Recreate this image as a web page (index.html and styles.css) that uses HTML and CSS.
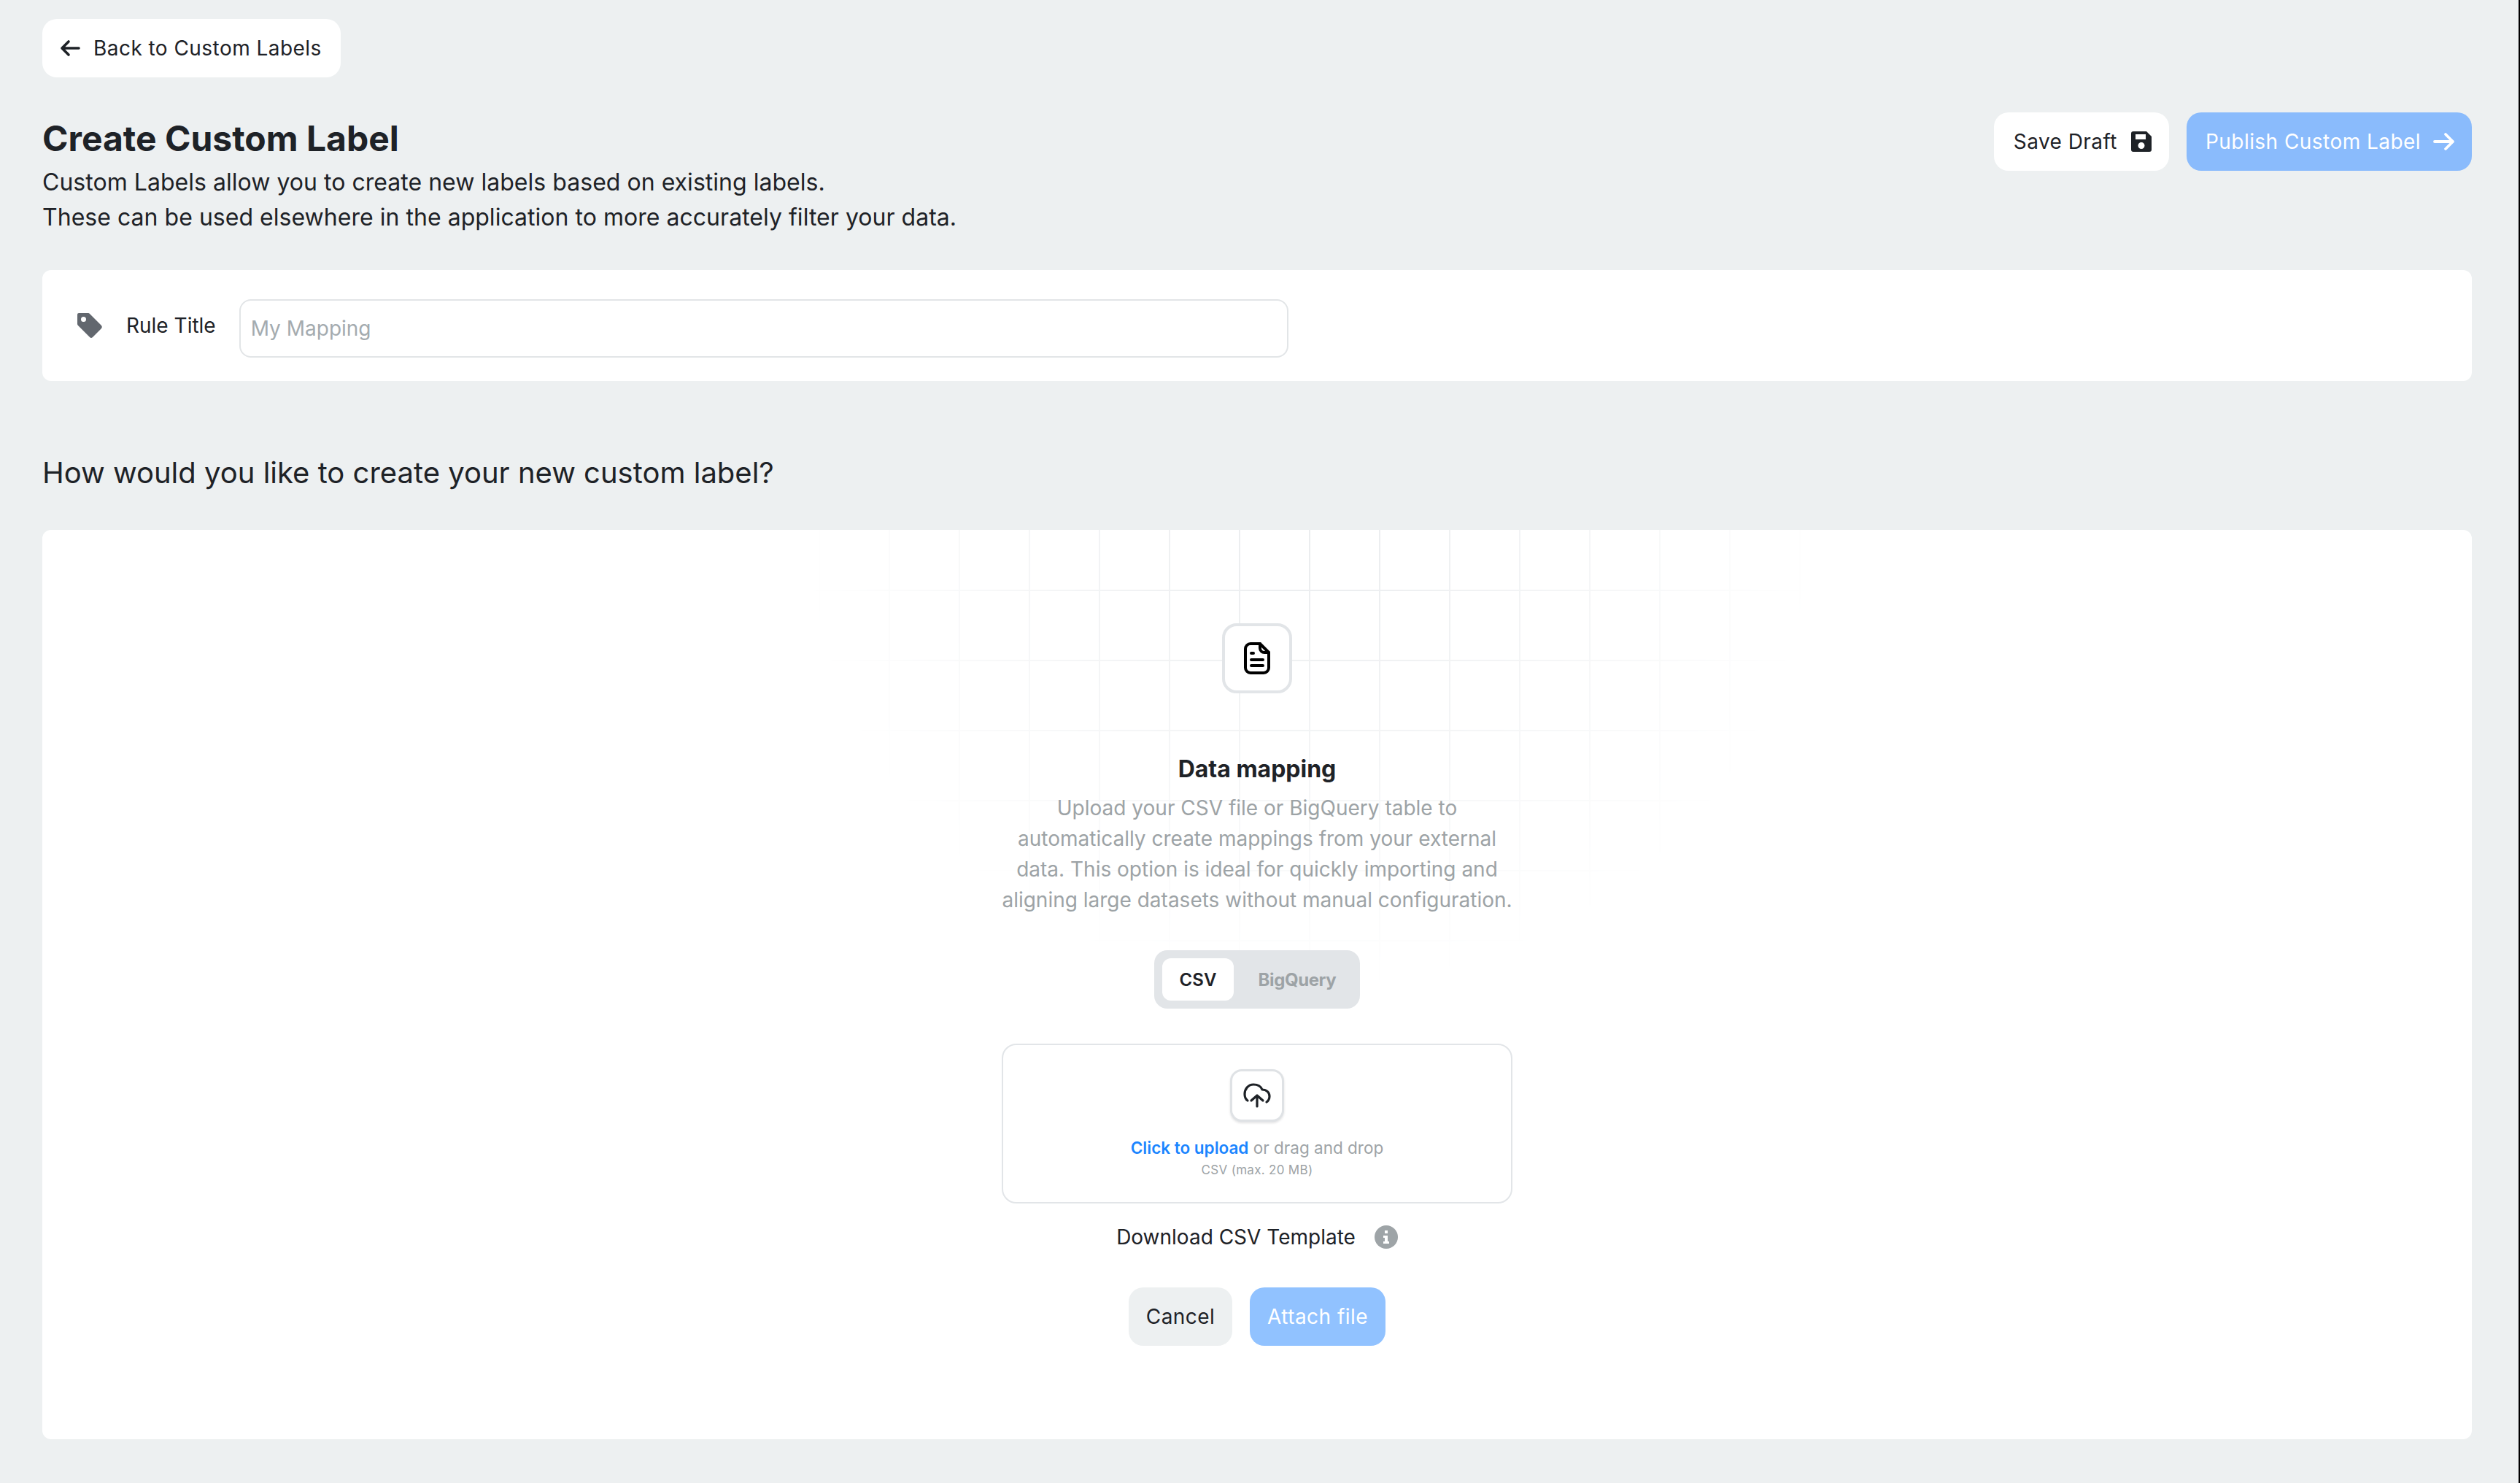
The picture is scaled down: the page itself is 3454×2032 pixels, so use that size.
FILE: index.html
```html
<!DOCTYPE html>
<html lang="en">
<head>
<meta charset="utf-8">
<title>Create Custom Label</title>
<link rel="stylesheet" href="styles.css">
</head>
<body>
<main class="page">
  <a class="btn btn-back">
    <svg class="ic-back" viewBox="0 0 28 24" fill="none" stroke="currentColor" stroke-width="3.6" stroke-linecap="round" stroke-linejoin="round"><path d="M26 12H3M12 3l-9 9 9 9"/></svg>
    <span>Back to Custom Labels</span>
  </a>
  <header class="head">
    <div>
      <h1 class="title">Create Custom Label</h1>
      <p class="sub">Custom Labels allow you to create new labels based on existing labels.</p>
      <p class="sub">These can be used elsewhere in the application to more accurately filter your data.</p>
    </div>
    <div class="actions">
      <a class="btn btn-save">
        <span>Save Draft</span>
        <svg class="ic-save" viewBox="0 0 28 28"><path fill="currentColor" fill-rule="evenodd" d="M3 0h18l7 7v18a3 3 0 0 1-3 3H3a3 3 0 0 1-3-3V3a3 3 0 0 1 3-3zm3 4v7h14V4zm8 11a4.500 4.500 0 1 0 0 9 4.500 4.500 0 0 0 0-9z"/></svg>
      </a>
      <a class="btn btn-publish">
        <span>Publish Custom Label</span>
        <svg class="ic-next" viewBox="0 0 30 26" fill="none" stroke="currentColor" stroke-width="3.800" stroke-linecap="round" stroke-linejoin="round"><path d="M2 13h25M17 3l10 10-10 10"/></svg>
      </a>
    </div>
  </header>

  <section class="card rule">
    <svg class="ic-tag" viewBox="0 0 36 36"><path fill="#62676e" fill-rule="evenodd" d="M3 1h13a3 3 0 0 1 2 1l16 16a3 3 0 0 1 0 4L22 34a3 3 0 0 1-4 0L2 18a3 3 0 0 1-1-2V3a2 2 0 0 1 2-2zm6.500 5a3.500 3.500 0 1 0 0 7 3.500 3.500 0 0 0 0-7z"/></svg>
    <label class="rule-label">Rule Title</label>
    <input class="rule-input" type="text" placeholder="My Mapping">
  </section>

  <h2 class="question">How would you like to create your new custom label?</h2>

  <section class="card main">
    <div class="grid-bg"></div>
    <div class="stack">
      <div class="doc-box">
        <svg class="ic-doc" viewBox="0 0 36 44" fill="none" stroke="#000" stroke-width="4" stroke-linecap="round" stroke-linejoin="round"><path d="M9 2h13l12 12v21a7 7 0 0 1-7 7H9a7 7 0 0 1-7-7V9a7 7 0 0 1 7-7z"/><path d="M22 2v6a6 6 0 0 0 6 6h6M10 15h3M10 24h16M10 32h16"/></svg>
      </div>
      <h3 class="dm-title">Data mapping</h3>
      <p class="dm-text">Upload your CSV file or BigQuery table to automatically create mappings from your external data. This option is ideal for quickly importing and aligning large datasets without manual configuration.</p>
      <div class="toggle">
        <span class="tab tab-on">CSV</span>
        <span class="tab tab-off">BigQuery</span>
      </div>
      <div class="drop">
        <div class="up-box">
          <svg class="ic-up" viewBox="0 0 38 34" fill="none" stroke="#1e2227" stroke-width="3.200" stroke-linecap="round" stroke-linejoin="round"><path d="M6 24C3 22 2 18 2 15 2 8 7 2 14 2c5 0 10 2 12 7 6 0 10 4 10 9 0 3-1 6-4 8"/><path d="M19 32V17M11 24l8-7 8 7"/></svg>
        </div>
        <p class="drop-line"><span class="link">Click to upload</span> or drag and drop</p>
        <p class="drop-note">CSV (max. 20 MB)</p>
      </div>
      <div class="tmpl">
        <span>Download CSV Template</span>
        <span class="info">
          <svg viewBox="0 0 32 32"><circle cx="16" cy="16" r="16" fill="#9ea4a7"/><path fill="#fff" d="M14 7h4v4h-4zM12 14h6v8h2v3h-8v-3h2v-5h-2z"/></svg>
        </span>
      </div>
      <div class="form-btns">
        <a class="btn btn-cancel">Cancel</a>
        <a class="btn btn-attach">Attach file</a>
      </div>
    </div>
  </section>
</main>
</body>
</html>
```
FILE: styles.css
```css
* { box-sizing: border-box; }
html, body { margin: 0; padding: 0; }
body {
  background: #edf0f1;
  color: #1e2227;
  font-family: Inter, "Liberation Sans", sans-serif;
  width: 3454px;
  height: 2032px;
  overflow: hidden;
  border-right: 2px solid #000;
}
.page { padding: 26px 64px 0 58px; }
p, h1, h2, h3 { margin: 0; }

.btn {
  display: inline-flex;
  align-items: center;
  height: 80px;
  border-radius: 20px;
  font-size: 28px;
  letter-spacing: 0.45px;
}
.btn-back { background: #fff; padding: 0 26px 0 24px; gap: 18px; }
.ic-back { width: 28px; height: 24px; }

.head {
  display: flex;
  justify-content: space-between;
  align-items: flex-start;
  margin-top: 48px;
  height: 216px;
}
.title { font-size: 48px; line-height: 64px; font-weight: 650; margin: 4px 0 4px; }
.sub { font-size: 32px; line-height: 48px; letter-spacing: 0.03px; }
.actions { display: flex; gap: 24px; padding-top: 0; }
.btn-save { background: #fff; padding: 0 24px 0 27px; gap: 19px; }
.ic-save { width: 28px; height: 28px; }
.btn-publish { background: #8abbfc; color: #fff; padding: 0 23px 0 26px; gap: 17px; }
.ic-next { width: 30px; height: 26px; }

.card { background: #fff; border-radius: 12px; }
.rule {
  display: flex;
  align-items: center;
  padding: 32px 47px;
  height: 152px;
}
.ic-tag { width: 36px; height: 36px; }
.rule-label { font-size: 28px; margin-left: 32px; }
.rule-input {
  width: 1438px;
  height: 80px;
  margin: 8px 0 0 32px;
  padding: 0 14px;
  border: 2px solid #e2e5e7;
  border-radius: 16px;
  font: 400 28px Inter, "Liberation Sans", sans-serif;
  background: #fff;
  outline: none;
}
.rule-input::placeholder { color: #a4abaf; opacity: 1; }

.question {
  font-size: 40px;
  line-height: 56px;
  font-weight: 400;
  margin: 98px 0 50px;
}

.main { position: relative; height: 1246px; overflow: hidden; }
.grid-bg {
  position: absolute;
  inset: 0;
  background-image:
    linear-gradient(to right, #ebedef 2px, transparent 2px),
    linear-gradient(to bottom, #ebedef 2px, transparent 2px);
  background-size: 96px 96px;
  background-position: 8px 82px;
  -webkit-mask-image: radial-gradient(ellipse 700px 640px at 1736px 0, #000 10%, transparent 100%);
  mask-image: radial-gradient(ellipse 700px 640px at 1736px 0, #000 10%, transparent 100%);
}
.stack {
  position: relative;
  display: flex;
  flex-direction: column;
  align-items: center;
  padding-top: 128px;
}
.doc-box {
  width: 96px;
  height: 96px;
  border: 4px solid #e2e5e8;
  border-radius: 20px;
  background: #fff;
  display: flex;
  align-items: center;
  justify-content: center;
}
.ic-doc { width: 36px; height: 44px; }
.dm-title { font-size: 32px; line-height: 44px; font-weight: 700; margin-top: 82px; }
.dm-text {
  width: 720px;
  margin-top: 10px;
  font-size: 28px;
  line-height: 42px;
  text-align: center;
  color: #9da3a6;
}
.toggle {
  display: flex;
  width: 282px;
  height: 80px;
  margin-top: 48px;
  padding: 11px;
  border-radius: 18px;
  background: #e2e5e8;
}
.tab {
  display: flex;
  align-items: center;
  justify-content: center;
  height: 58px;
  font-size: 24px;
  font-weight: 600;
  color: #9da3a6;
  flex: 1;
}
.tab-on { flex: 0 0 98px; background: #fff; color: #1e2227; border-radius: 12px; }
.tab-off { padding-left: 12px; font-weight: 700; letter-spacing: -0.4px; }
.drop {
  width: 700px;
  height: 219px;
  margin-top: 48px;
  border: 2px solid #e2e5e8;
  border-radius: 20px;
  background: #fff;
  display: flex;
  flex-direction: column;
  align-items: center;
  padding-top: 33px;
}
.up-box {
  width: 74px;
  height: 72px;
  border: 3px solid #dfe2e5;
  border-radius: 16px;
  background: #fff;
  box-shadow: 0 2px 3px rgba(30, 34, 39, 0.12);
  display: flex;
  align-items: center;
  justify-content: center;
}
.ic-up { width: 38px; height: 34px; }
.drop-line { font-size: 22.5px; line-height: 30px; margin-top: 21px; color: #9da3a6; }
.link { color: #1a85ff; font-weight: 600; }
.drop-note { font-size: 17px; line-height: 24px; margin-top: 3px; color: #9da3a6; letter-spacing: 0.3px; }
.tmpl { display: flex; align-items: center; gap: 26px; margin-top: 28px; font-size: 28px; line-height: 36px; }
.info { display: flex; width: 32px; height: 32px; }
.info svg { width: 32px; height: 32px; }
.form-btns { display: flex; gap: 24px; margin-top: 51px; }
.btn-cancel { width: 142px; justify-content: center; background: #edf0f1; }
.btn-attach { width: 186px; justify-content: center; background: #91c2ff; color: #fff; }
```
